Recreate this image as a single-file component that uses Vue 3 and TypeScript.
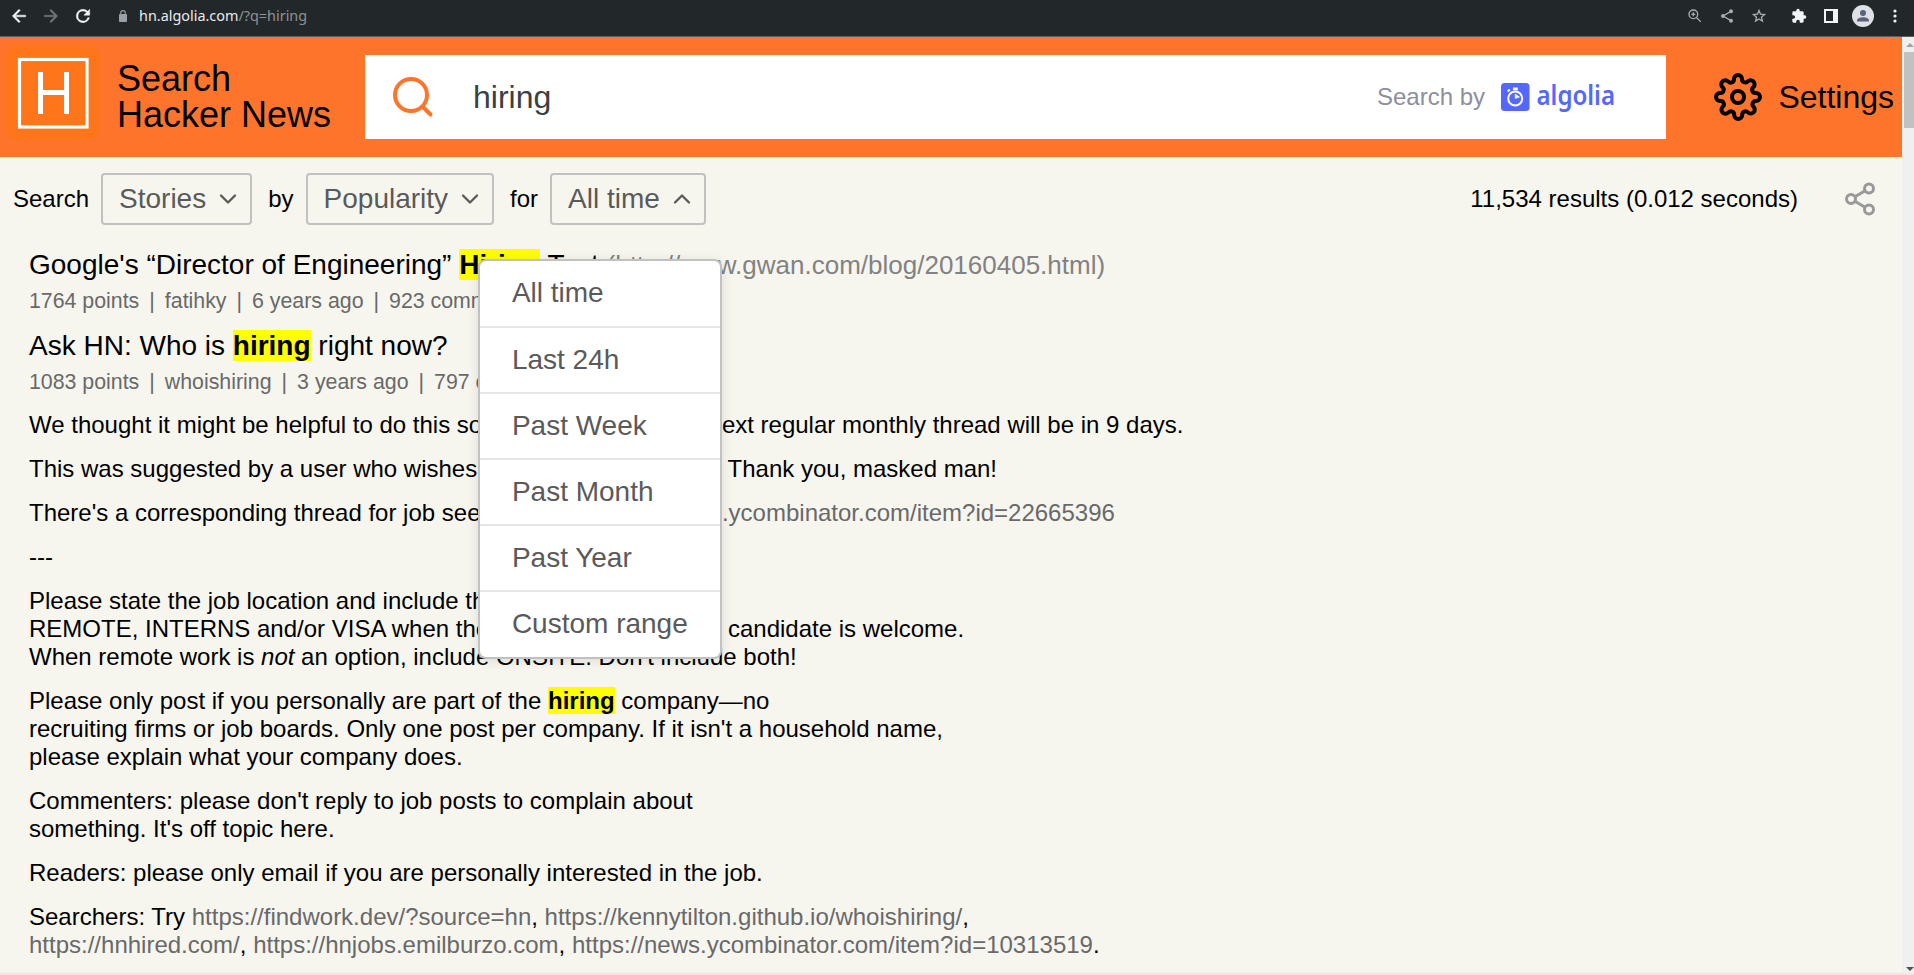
<script setup lang="ts">
interface Filter {
  label: string
  value: string
  open: boolean
}

const filters: Filter[] = [
  { label: 'Search', value: 'Stories', open: false },
  { label: 'by', value: 'Popularity', open: false },
  { label: 'for', value: 'All time', open: true },
]

const ranges: string[] = ['All time', 'Last 24h', 'Past Week', 'Past Month', 'Past Year', 'Custom range']
const firstMeta: string[] = ['1764 points', 'fatihky', '6 years ago', '923 comments']
const secondMeta: string[] = ['1083 points', 'whoishiring', '3 years ago', '797 comments']
</script>

<template>
  <div class="window">
    <div class="chrome">
      <div class="nav">
        <svg class="tool" viewBox="0 0 24 24"><path fill="#f1f3f4" stroke="#f1f3f4" stroke-width=".6" d="M20 11H7.83l5.59-5.59L12 4l-8 8 8 8 1.41-1.41L7.83 13H20v-2z" /></svg>
        <svg class="tool" viewBox="0 0 24 24"><path fill="#75787b" stroke="#75787b" stroke-width=".4" d="M4 13h12.17l-5.59 5.59L12 20l8-8-8-8-1.41 1.41L16.17 11H4v2z" /></svg>
        <svg class="tool" viewBox="0 0 24 24"><path fill="#f1f3f4" stroke="#f1f3f4" stroke-width=".6" d="M17.65 6.35A7.96 7.96 0 0 0 12 4a8 8 0 1 0 7.73 10h-2.08A6 6 0 1 1 12 6c1.66 0 3.14.69 4.22 1.78L13 11h7V4l-2.35 2.35z" /></svg>
      </div>
      <svg class="lock" viewBox="0 0 8 12"><path fill="#9aa0a6" d="M1.2 4V2.9a2.8 2.8 0 0 1 5.6 0V4H7.3a.7.7 0 0 1 .7.7v6.6a.7.7 0 0 1-.7.7H.7a.7.7 0 0 1-.7-.7V4.7A.7.7 0 0 1 .7 4zM2.3 4h3.4V2.9a1.7 1.7 0 0 0-3.4 0z" /></svg>
      <div class="address">hn.algolia.com<span>/?q=hiring</span></div>
      <div class="actions">
        <svg class="small" viewBox="0 0 24 24" fill="none" stroke="#a9acaf" stroke-width="2"><circle cx="9.5" cy="9.5" r="6.5" /><path d="M14.5 14.5l6.3 6.3M6.5 9.5h6M9.5 6.5v6" /></svg>
        <svg class="small" viewBox="0 0 24 24"><path fill="none" stroke="#a9acaf" stroke-width="2" d="M18 5L6 12l12 7" /><g fill="#a9acaf"><circle cx="18" cy="5" r="3" /><circle cx="6" cy="12" r="3" /><circle cx="18" cy="19" r="3" /></g></svg>
        <svg class="small" viewBox="0 0 24 24"><path fill="none" stroke="#a9acaf" stroke-width="2" d="M12 3.6l2.3 5.6 6 .5-4.6 4 1.4 5.9-5.1-3.1-5.1 3.1 1.4-5.9-4.6-4 6-.5z" /></svg>
        <svg class="small puzzle" viewBox="0 0 24 24"><path fill="#f1f3f4" d="M20.5 11H19V7a2 2 0 0 0-2-2h-4V3.5a2.5 2.5 0 0 0-5 0V5H4a2 2 0 0 0-2 2v3.8h1.5a2.7 2.7 0 0 1 0 5.4H2V20c0 1.1.9 2 2 2h3.8v-1.5a2.7 2.7 0 0 1 5.4 0V22H17a2 2 0 0 0 2-2v-4h1.5a2.5 2.5 0 0 0 0-5z" /></svg>
        <svg class="panel" viewBox="0 0 14 14"><path fill="#f1f3f4" fill-rule="evenodd" d="M0 0h14v14H0zM2 2v10h7V2z" /></svg>
        <svg class="avatar" viewBox="0 0 22 22"><circle cx="11" cy="11" r="11" fill="#dee1e6" /><circle cx="11" cy="8" r="3" fill="#5a6379" /><path fill="#5a6379" d="M5 16.500v-1c0-4.500 12-4.500 12 0v1z" /></svg>
        <svg class="dots" viewBox="0 0 4 14" fill="#f1f3f4"><circle cx="2" cy="2" r="1.6" /><circle cx="2" cy="7" r="1.6" /><circle cx="2" cy="12" r="1.6" /></svg>
      </div>
    </div>

    <div class="viewport">
      <div class="page">
        <header class="header">
          <svg class="logo" viewBox="0 0 94 94">
            <rect width="94" height="94" rx="10" fill="#ff7519" />
            <rect x="13.5" y="13.5" width="67.5" height="67.5" fill="none" stroke="#fff" stroke-width="3.2" />
            <path d="M34.500 26v42M60.500 26v42M34.500 46.500h26" fill="none" stroke="#fff" stroke-width="5" />
          </svg>
          <div class="brand">Search<br />Hacker News</div>
          <div class="searchbar">
            <svg class="lens" viewBox="0 0 42 42" fill="none" stroke="#ff742b" stroke-width="4"><circle cx="19" cy="19" r="16" /><path d="M30.500 30.500l8 8" stroke-linecap="round" /></svg>
            <div class="query">hiring</div>
            <div class="powered">Search by</div>
            <svg class="algolia" viewBox="0 0 116 32">
              <rect x="0" y="2" width="28.500" height="28" rx="3.500" fill="#5468ff" />
              <circle cx="14.200" cy="17.500" r="7" fill="none" stroke="#fff" stroke-width="2" />
              <path d="M14.200 17.500V13l4.300 3z" fill="#fff" stroke="#fff" stroke-width=".6" />
              <path d="M12 6.500h4.800v2.800H12zM6 9.800l2-2 1.500 1.500-2 2z" fill="#fff" />
              <text class="wordmark" x="35.500" y="23.500" textLength="78.500" lengthAdjust="spacingAndGlyphs">algolia</text>
            </svg>
          </div>
          <div class="settings">
            <svg class="gear" viewBox="0 0 24 24" fill="none" stroke="#000" stroke-width="2" stroke-linecap="round" stroke-linejoin="round"><circle cx="12" cy="12" r="3" /><path d="M19.400 15a1.650 1.650 0 0 0 .330 1.820l.060.060a2 2 0 0 1-2.830 2.830l-.060-.060a1.650 1.650 0 0 0-2.800 1.170V21a2 2 0 0 1-4 0v-.090a1.650 1.650 0 0 0-2.900-1.180l-.060.060a2 2 0 0 1-2.830-2.830l.060-.060A1.650 1.650 0 0 0 3.090 14H3a2 2 0 0 1 0-4h.090a1.650 1.650 0 0 0 1.180-2.900l-.060-.060a2 2 0 0 1 2.830-2.830l.060.060A1.650 1.650 0 0 0 10 3.090V3a2 2 0 0 1 4 0v.090a1.650 1.650 0 0 0 2.820 1.180l.060-.060a2 2 0 0 1 2.830 2.830l-.060.060A1.650 1.650 0 0 0 20.910 10H21a2 2 0 0 1 0 4h-.090a1.650 1.650 0 0 0-1.510 1z" /></svg>
            <span>Settings</span>
          </div>
        </header>

        <div class="filters">
          <template v-for="f in filters" :key="f.label">
            <span class="filter-label">{{ f.label }}</span>
            <div class="select">
              <button class="select-button" type="button">
                {{ f.value }}
                <svg class="chevron" viewBox="0 0 24 24"><path :d="f.open ? 'M18 15l-6-6-6 6' : 'M6 9l6 6 6-6'" /></svg>
              </button>
              <ul v-if="f.open" class="menu">
                <li v-for="r in ranges" :key="r">{{ r }}</li>
              </ul>
            </div>
          </template>
          <div class="stats">11,534 results (0.012 seconds)</div>
          <svg class="share" viewBox="0 0 24 24" fill="none" stroke="#999" stroke-width="2"><circle cx="18" cy="5" r="3" /><circle cx="6" cy="12" r="3" /><circle cx="18" cy="19" r="3" /><path d="M8.590 13.510l6.830 3.980M15.410 6.510l-6.820 3.980" /></svg>
        </div>

        <main class="results">
          <article class="story">
            <h2>Google's “Director of Engineering” <mark>Hiring</mark> Test <a>(http://www.gwan.com/blog/20160405.html)</a></h2>
            <div class="meta"><span v-for="m in firstMeta" :key="m">{{ m }}</span></div>
          </article>
          <article class="story">
            <h2>Ask HN: Who is <mark>hiring</mark> right now?</h2>
            <div class="meta"><span v-for="m in secondMeta" :key="m">{{ m }}</span></div>
            <div class="body">
              <p>We thought it might be helpful to do this sooner than usual. The next regular monthly thread will be in 9 days.</p>
              <p>This was suggested by a user who wishes to remain anonymous. Thank you, masked man!</p>
              <p>There's a corresponding thread for job seekers here: <a>https://news.ycombinator.com/item?id=22665396</a></p>
              <p>---</p>
              <p>Please state the job location and include the keywords<br />REMOTE, INTERNS and/or VISA when the corresponding sort of candidate is welcome.<br />When remote work is <em>not</em> an option, include ONSITE. Don't include both!</p>
              <p>Please only post if you personally are part of the <mark>hiring</mark> company—no<br />recruiting firms or job boards. Only one post per company. If it isn't a household name,<br />please explain what your company does.</p>
              <p>Commenters: please don't reply to job posts to complain about<br />something. It's off topic here.</p>
              <p>Readers: please only email if you are personally interested in the job.</p>
              <p>Searchers: Try <a>https://findwork.dev/?source=hn</a>, <a>https://kennytilton.github.io/whoishiring/</a>,<br /><a>https://hnhired.com/</a>, <a>https://hnjobs.emilburzo.com</a>, <a>https://news.ycombinator.com/item?id=10313519</a>.</p>
            </div>
          </article>
        </main>
      </div>
      <div class="scrollbar">
        <svg class="arrow" viewBox="0 0 8 4"><path fill="#a3a3a3" d="M4 0l4 4H0z" /></svg>
        <div class="thumb"></div>
        <svg class="arrow down" viewBox="0 0 8 4"><path fill="#505050" d="M0 0h8L4 4z" /></svg>
      </div>
    </div>
    <div class="edge"></div>
  </div>
</template>

<style>
body {
  margin: 0;
  overflow: hidden;
}
</style>

<style scoped>
.window {
  display: flex;
  flex-direction: column;
  width: 1914px;
  height: 975px;
  overflow: hidden;
  background: #f6f6ef;
  color: #000;
  font-family: "Liberation Sans", Arial, sans-serif;
}

svg {
  display: block;
  flex: none;
}

.chrome {
  display: flex;
  align-items: center;
  flex: none;
  box-sizing: border-box;
  height: 37px;
  padding: 0 6px 5px 9px;
  border-bottom: 1px solid #5b5f62;
  background: #22272a;
}

.nav {
  display: flex;
  gap: 12px;
}

.tool {
  width: 20px;
  height: 20px;
}

.lock {
  width: 8px;
  height: 12px;
  margin-left: 26px;
}

.address {
  margin-left: 12px;
  color: #e8eaed;
  font: 14.400px "Noto Sans", sans-serif;
}

.address span {
  color: #8f9295;
}

.actions {
  display: flex;
  align-items: center;
  margin-left: auto;
}

.small {
  width: 16px;
  height: 16px;
  margin-right: 16px;
}

.puzzle {
  margin-left: 8px;
  margin-right: 17px;
}

.panel {
  width: 14px;
  height: 14px;
  margin-right: 14px;
}

.avatar {
  width: 22px;
  height: 22px;
  margin-right: 19px;
}

.dots {
  width: 4px;
  height: 14px;
  margin-right: 11px;
}

.viewport {
  display: flex;
  flex: 1;
  min-height: 0;
}

.page {
  flex: 1;
}

.header {
  display: flex;
  align-items: center;
  box-sizing: border-box;
  height: 120px;
  padding: 0 8px 0 6px;
  background: #ff742b;
}

.logo {
  width: 94px;
  height: 94px;
  margin-bottom: 8px;
}

.brand {
  width: 248px;
  margin-left: 17px;
  font-size: 36px;
  line-height: 36px;
}

.searchbar {
  display: flex;
  align-items: center;
  box-sizing: border-box;
  width: 1301px;
  height: 84px;
  padding: 0 49px 0 27px;
  background: #fff;
}

.lens {
  width: 42px;
  height: 42px;
}

.query {
  margin-left: 39px;
  color: #3c4043;
  font-size: 32px;
}

.powered {
  margin: 0 16px 0 auto;
  color: #8e8e9c;
  font-size: 24px;
}

.algolia {
  width: 116px;
  height: 32px;
}

.wordmark {
  fill: #5468ff;
  font: 600 27px "Noto Sans", sans-serif;
}

.settings {
  display: flex;
  align-items: center;
  gap: 16px;
  margin-left: auto;
  font-size: 32px;
}

.gear {
  width: 48px;
  height: 48px;
}

.filters {
  display: flex;
  align-items: center;
  box-sizing: border-box;
  height: 84px;
  padding: 0 24px 0 13px;
  font-size: 24px;
}

.filter-label {
  margin-right: 12px;
}

.select {
  position: relative;
  margin-right: 16px;
}

.select-button {
  display: flex;
  align-items: center;
  gap: 8px;
  box-sizing: border-box;
  height: 52px;
  padding: 0 8px 0 16px;
  border: 2px solid #c1c1c1;
  border-radius: 4px;
  background: transparent;
  color: #5a5a5a;
  font: 28px "Liberation Sans", Arial, sans-serif;
}

.chevron {
  width: 28px;
  height: 28px;
  fill: none;
  stroke: #5a5a5a;
  stroke-width: 2;
  stroke-linecap: round;
  stroke-linejoin: round;
}

.menu {
  position: absolute;
  z-index: 2;
  top: 86px;
  right: -16px;
  box-sizing: border-box;
  width: 244px;
  height: 400px;
  margin: 0;
  padding: 0;
  border: 2px solid #c1c1c1;
  border-radius: 8px;
  background: #fff;
  box-shadow: 0 2px 12px rgba(0, 0, 0, 0.1);
  color: #5a5a5a;
  font-size: 28px;
  list-style: none;
}

.menu li {
  box-sizing: border-box;
  height: 66px;
  padding-left: 32px;
  border-bottom: 2px solid #e6e6e6;
  line-height: 64px;
}

.menu li:first-child {
  height: 67px;
}

.menu li:last-child {
  height: 65px;
  border-bottom: 0;
}

.stats {
  margin-left: auto;
}

.share {
  width: 36px;
  height: 36px;
  margin-left: 44px;
}

.results {
  padding: 6px 0 0 29px;
  white-space: nowrap;
}

.story {
  height: 81px;
}

h2 {
  margin: 0;
  font-size: 28px;
  font-weight: 400;
  line-height: 36px;
}

h2 a {
  color: #828282;
  font-size: 26px;
}

mark {
  background: #ff0;
  color: #000;
  font-weight: 700;
}

.meta {
  display: flex;
  color: #696969;
  font-size: 21.330px;
  line-height: 36px;
}

.meta span + span::before {
  content: "|";
  margin: 0 10px;
}

.body {
  margin-top: 11px;
  color: #000;
  font-size: 24px;
  line-height: 28px;
}

.body p {
  margin: 0 0 16px;
}

.body a {
  color: #696969;
}

.scrollbar {
  display: flex;
  flex-direction: column;
  align-items: center;
  flex: none;
  width: 12px;
  background: #f0f0f0;
}

.arrow {
  width: 8px;
  height: 4px;
  margin: 6px 0 5px 3px;
}

.thumb {
  width: 10px;
  height: 76px;
  margin-left: 2px;
  background: #c1c1c1;
}

.down {
  margin: auto 0 2px 3px;
}

.edge {
  flex: none;
  height: 2px;
  background: #e9e9e3;
}
</style>
